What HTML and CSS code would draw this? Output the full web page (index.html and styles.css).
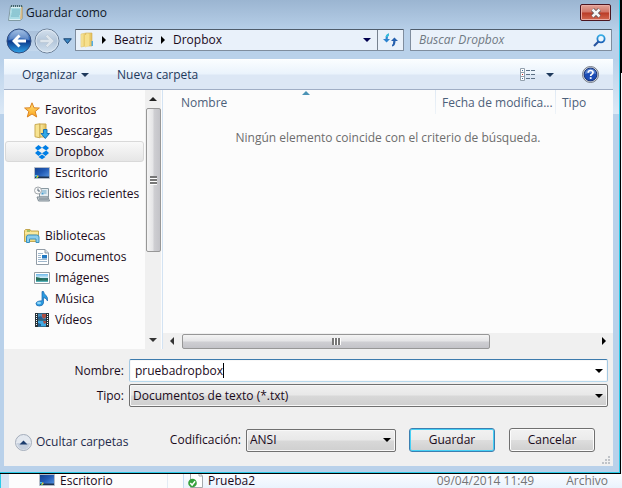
FILE: index.html
```html
<!DOCTYPE html>
<html lang="es">
<head>
<meta charset="utf-8">
<title>Guardar como</title>
<link rel="stylesheet" href="styles.css">
</head>
<body>
<svg class="defs" aria-hidden="true">
  <defs>
    <linearGradient id="blueOrb" x1="0" y1="0" x2="0" y2="1"><stop offset="0" stop-color="#8fb2de"/><stop offset=".45" stop-color="#2b62b4"/><stop offset=".5" stop-color="#0c3789"/><stop offset="1" stop-color="#2fa5ea"/></linearGradient>
    <linearGradient id="greyOrb" x1="0" y1="0" x2="0" y2="1"><stop offset="0" stop-color="#d5e1ee"/><stop offset=".5" stop-color="#b3c6da"/><stop offset="1" stop-color="#d3e2f0"/></linearGradient>
    <linearGradient id="folder" x1="0" y1="0" x2="1" y2="0"><stop offset="0" stop-color="#fbeea8"/><stop offset="1" stop-color="#e2bd55"/></linearGradient>
    <linearGradient id="star" x1="0" y1="0" x2="0" y2="1"><stop offset="0" stop-color="#ffe27a"/><stop offset="1" stop-color="#fba51c"/></linearGradient>
    <linearGradient id="screen" x1="0" y1="0" x2="1" y2="1"><stop offset="0" stop-color="#123f8c"/><stop offset=".45" stop-color="#2159b4"/><stop offset="1" stop-color="#5b9be6"/></linearGradient>
    <linearGradient id="blue" x1="0" y1="0" x2="0" y2="1"><stop offset="0" stop-color="#36aee6"/><stop offset="1" stop-color="#1b62b8"/></linearGradient>
    <linearGradient id="pic" x1="0" y1="0" x2="0" y2="1"><stop offset="0" stop-color="#6db8ea"/><stop offset=".5" stop-color="#d9f0f8"/><stop offset=".55" stop-color="#246f6d"/><stop offset="1" stop-color="#5ebbc4"/></linearGradient>
    <symbol id="desktop" viewBox="0 0 16 16"><path d="M.5 2.500h15v11H.5z" fill="url(#screen)" stroke="#b4bcc8"/><path d="M1 11.500h14V13H1z" fill="#1d3350"/><path d="M1 10h2v1.500H1z" fill="#4ac3e8"/><path d="M3 10.500h1.500V12H3z" fill="#e7c73e"/><path d="M2 12h2v1H2z" fill="#6fc24c"/></symbol>
  </defs>
</svg>

<div class="screen">
<main class="dialog">
  <header class="titlebar">
    <svg class="note" viewBox="0 0 16 17"><path d="M2.500 2h12v12l-2 2.500H.5z" fill="#d9eff4" stroke="#809aa3"/><path d="M3 4h10l-1 11H1.500z" fill="#a9dbe4"/><path d="M13 3h1.500v11L12 16z" fill="#d8b985"/><path d="M4 6h8M4 8h8M3.500 10H12M3 12h8" stroke="#74b4c3"/><path d="M3.500 1v2M5.500 1v2M7.500 1v2M9.500 1v2M11.500 1v2M13.500 1v2" stroke="#42636c"/></svg>
    <h1>Guardar como</h1>
    <button class="close" aria-label="Cerrar"><svg width="12" height="10" viewBox="0 0 12 10"><path d="M2.500 1.500l7 7M9.500 1.500l-7 7" stroke="#5c5155" stroke-width="4"/><path d="M2.500 1.500l7 7M9.500 1.500l-7 7" stroke="#f5f5f5" stroke-width="2.500"/></svg></button>
  </header>

  <nav class="navbar">
    <div class="orbs">
      <button aria-label="Atrás"><svg width="26" height="26" viewBox="0 0 26 26"><circle cx="13" cy="13" r="12" fill="url(#blueOrb)" stroke="#324d7e"/><path d="M3 12a10 10 0 0 1 20 0q-10-4-20 0z" fill="#fff" opacity=".22"/><path d="M6 13l6.500-6.500 2 2-3 3H20v3h-8.500l3 3-2 2z" fill="#fff"/></svg></button>
      <button aria-label="Adelante"><svg width="26" height="26" viewBox="0 0 26 26"><circle cx="13" cy="13" r="12" fill="url(#greyOrb)" stroke="#6c8098"/><circle cx="13" cy="13" r="11" fill="none" stroke="#e6eef6" opacity=".7"/><path d="M20 13l-6.500-6.500-2 2 3 3H6v3h8.500l-3 3 2 2z" fill="#dde5ec" stroke="#b5c4d3" stroke-width=".6"/></svg></button>
      <button class="recent" aria-label="Ubicaciones recientes"><svg width="9" height="7" viewBox="0 0 9 7"><path d="M.7.8h7.600L4.500 5.500z" fill="#3a87c4" stroke="#16406f"/></svg></button>
    </div>
    <div class="address">
      <svg width="14" height="16" viewBox="0 0 14 16"><path d="M1 2l5-1v13l-5 1z" fill="url(#folder)" stroke="#dfc36f" stroke-width=".6"/><path d="M6 1h6v13H6z" fill="url(#folder)" stroke="#d5b057" stroke-width=".6"/><path d="M5 3l4-1v12l-4 1.500z" fill="#f6e08d"/><path d="M11.500 9h1.500v5h-1.500z" fill="#54aee1"/></svg>
      <i class="tri right"></i><a href="#beatriz">Beatriz</a>
      <i class="tri right"></i><a href="#dropbox">Dropbox</a>
      <button class="drop" aria-label="Ubicaciones anteriores"><i class="tri down navy"></i></button>
      <button class="refresh" aria-label="Actualizar"><svg width="15" height="14" viewBox="0 0 15 14"><path d="M0 6h2.500Q2.500 1 6 .5V2Q4.700 3 4.700 6H7L3.600 9.500z" fill="#2c83cf"/><path d="M2.500 4Q3 1 6 .5V2L4.700 4z" fill="#32bedb"/><path d="M15 8h-2.500q0 5-3.500 5.500V12q1.300-1 1.300-4H8l3.400-3.500z" fill="#2560ae"/></svg></button>
    </div>
    <label class="search"><input type="text" aria-label="Buscar" placeholder="Buscar Dropbox"><svg width="13" height="13" viewBox="0 0 13 13"><circle cx="8" cy="4.800" r="3.600" fill="#eaf6ff" stroke="url(#blue)" stroke-width="1.800"/><path d="M5.500 7.500L1 12" stroke="#27549f" stroke-width="2.200"/></svg></label>
  </nav>

  <div class="toolbar">
    <button>Organizar <i class="tri down slate"></i></button>
    <button>Nueva carpeta</button>
    <button class="view" aria-label="Cambiar la vista"><svg width="16" height="13" viewBox="0 0 16 13"><path d="M.5.500h4v12h-4zM.5 4.500h4M.5 8.500h4" fill="#fff" stroke="#93a0ad"/><path d="M2 2h1v1H2zM2 10h1v1H2z" fill="#3f6da0"/><path d="M2 6h1v1H2z" fill="#c22"/><path d="M6 2.500h4M11 2.500h4M6 6.500h4M11 6.500h4M6 10.500h4M11 10.500h4" stroke="#5d7186"/></svg><i class="tri down slate"></i></button>
    <button class="help" aria-label="Ayuda"><svg width="17" height="17" viewBox="0 0 17 17"><circle cx="8.500" cy="8.500" r="8" fill="#d3d8df" stroke="#747b87"/><circle cx="8.500" cy="8.500" r="6.400" fill="#1c4cb5" stroke="#173275"/><path d="M3 8a5.500 5.500 0 0 1 11 0q-5-2-11 0z" fill="#7da5e2" opacity=".6"/><path d="M6.200 6.800Q6.300 4.500 8.600 4.500T11 6.400Q11 7.600 9.700 8.300 8.700 8.900 8.700 10" fill="none" stroke="#fff" stroke-width="1.700"/><path d="M7.800 11.200h1.800v1.700H7.800z" fill="#fff"/></svg></button>
  </div>

  <div class="content">
    <aside class="sidebar">
      <div class="tree">
        <a class="group" href="#favoritos"><svg viewBox="0 0 16 16"><path d="M8 .8l2 5 5.400.2-4.200 3.500 1.500 5.500L8 12l-4.700 3 1.500-5.500L.6 6 6 5.800z" fill="url(#star)" stroke="#db8424"/></svg>Favoritos</a>
        <a href="#descargas"><svg viewBox="0 0 16 16"><path d="M1 1.500L6 .8v14l-5-1z" fill="#f7e391" stroke="#c9ab55"/><path d="M6 1h6v13H6z" fill="url(#folder)" stroke="#c9a64c"/><path d="M9.500 6.500h3.500v4h2.500l-4.200 5-4.300-5h2.500z" fill="#2fa9e8" stroke="#1b70b3"/></svg>Descargas</a>
        <a class="selected" href="#dropbox"><svg viewBox="0 0 16 16" fill="#007ee5"><path d="M4.500 1L8 3.800 3.800 6.500 1 4zM11.500 1L15 4l-2.800 2.500L8 3.800zM3.800 6.500L8 9.200 4.500 12 1 9zM12.200 6.500L15 9l-3.500 3L8 9.200zM4.500 13L8 10.500l3.500 2.500L8 15.200z"/></svg>Dropbox</a>
        <a href="#escritorio"><svg viewBox="0 0 16 16"><use href="#desktop"/></svg>Escritorio</a>
        <a href="#recientes"><svg viewBox="0 0 16 16"><path d="M5.500 2.500h9V11h-9z" fill="#e4edf1" stroke="#8998a0"/><path d="M7.500 5h5M9.500 7h3" stroke="#66a5c7"/><path d="M7.500 6.500h2v2h-2z" fill="#4a9fd0"/><path d="M3 11l11 0 1.500 4H4.500z" fill="#c9d1d6" stroke="#7e8b94"/><path d="M5 13h9" stroke="#65747e"/><circle cx="4" cy="4.500" r="3.500" fill="#f7f8f8" stroke="#a4a9ad"/><path d="M4 2.500v2.500h2" fill="none" stroke="#526273"/></svg>Sitios recientes</a>
        <a class="group gap" href="#bibliotecas"><svg viewBox="0 0 16 16"><path d="M.5 13.500v-11l1-1H6l1 1.500h7.500v10.500z" fill="#f2db80" stroke="#c3a751"/><path d="M1 5h13" stroke="#fff6bb"/><path d="M3 3h3" stroke="#58a44e"/><path d="M2.500 14.500V9q0-2 2-2h8q2.500 0 2.500 2v5.500h-3V11H5.500v3.500z" fill="#8bcdec" stroke="#398fbe"/></svg>Bibliotecas</a>
        <a href="#documentos"><svg viewBox="0 0 16 16"><path d="M2.500.500h8.500L14.500 4v11.500h-12z" fill="#fff" stroke="#929ca6"/><path d="M11 .5V4h3.500" fill="#d7dfe6" stroke="#929ca6"/><path d="M4 4.500h5M4 6.500h3M4 8.500h3M4 10.500h9M4 12.500h9" stroke="#9fb7cc"/><path d="M8 6h5v3.500H8z" fill="#2279c2"/></svg>Documentos</a>
        <a href="#imagenes"><svg viewBox="0 0 16 16"><path d="M.5 2.500h15v11H.5z" fill="#fff" stroke="#969ea5"/><path d="M2 4h12v8H2z" fill="url(#pic)"/><path d="M2 7q4 0 7 2.500l5-.5v1.500H2z" fill="#276c55"/></svg>Imágenes</a>
        <a href="#musica"><svg viewBox="0 0 16 16"><path d="M8 .5h1.500q.5 2.500 2.500 4t1.500 5.500Q12.500 7 9.500 6.500V12Q9 15 5.300 15 2 15 2 12.500 2.500 9.800 8 9.800z" fill="#2a9be0" stroke="#1763ac" stroke-width=".7"/><ellipse cx="5" cy="12" rx="2" ry="1.200" fill="#8fd6f7"/></svg>Música</a>
        <a href="#videos"><svg viewBox="0 0 16 16"><path d="M1 1h14v14H1z" fill="#283238"/><path d="M4 1.500h8v6H4z" fill="#468dbb"/><path d="M4 8.500h8v6H4z" fill="#3faae4"/><path d="M8 2h4v3l-2 2-2-2zM9 9h3v2l-2 1z" fill="#ac4f43"/><path d="M4 5l3-1 2 3H4zM4 11l3 1v2H4z" fill="#235e91"/><path d="M2.500 2v12M13.500 2v12" stroke="#fff" stroke-dasharray="1 1"/></svg>Vídeos</a>
      </div>
      <div class="vscroll"><i class="tri up"></i><div class="thumb"></div><i class="tri down tail"></i></div>
    </aside>
    <section class="files">
      <table>
        <thead><tr><th class="name">Nombre<i class="sort"></i></th><th class="date">Fecha de modifica...</th><th class="type">Tipo</th></tr></thead>
        <tbody><tr><td colspan="3">Ningún elemento coincide con el criterio de búsqueda.</td></tr></tbody>
      </table>
      <div class="hscroll"><i class="tri left"></i><div class="thumb"></div><i class="tri right"></i></div>
    </section>
  </div>

  <form class="footer">
    <div class="fields">
      <label for="name">Nombre:</label>
      <div class="combo edit"><input id="name" type="text" value="pruebadropbox"><span class="caret"></span><i class="tri down"></i></div>
      <label for="kind">Tipo:</label>
      <div class="combo"><select id="kind"><option>Documentos de texto (*.txt)</option></select><i class="tri down"></i></div>
    </div>
    <div class="actions">
      <button class="hide" type="button"><svg width="17" height="17" viewBox="0 0 17 17"><circle cx="8.500" cy="8.500" r="8" fill="#e3e8ef" stroke="#a3acba"/><path d="M2 9h13a6.500 6.500 0 0 1-13 0z" fill="#c6d0de"/><path d="M4.500 10.500l4-4 4 4z" fill="#1c3d6e"/></svg>Ocultar carpetas</button>
      <label for="enc">Codificación:</label>
      <div class="combo encoding"><select id="enc"><option>ANSI</option></select><i class="tri down"></i></div>
      <button class="push default" type="button">Guardar</button>
      <button class="push" type="button">Cancelar</button>
    </div>
    <svg class="grip" width="8" height="8" viewBox="0 0 8 8"><path d="M6 0h2v2H6zM3 3h2v2H3zM6 3h2v2H6zM0 6h2v2H0zM3 6h2v2H3zM6 6h2v2H6z" fill="#bfc3c8"/></svg>
  </form>
</main>

<div class="behind">
  <div class="behind-tree"><svg width="16" height="14" viewBox="0 2 16 14"><use href="#desktop" width="16" height="16"/></svg>Escritorio</div>
  <div class="behind-files">
    <svg width="15" height="14" viewBox="0 2 15 14"><path d="M2.500.500H11L14.500 4v11.500h-12z" fill="#fff" stroke="#a4a9ad"/><path d="M11 .5V4h3.500" fill="none" stroke="#a4a9ad"/><circle cx="4.500" cy="11" r="4.300" fill="#35a13b"/><path d="M2.300 11l1.800 2 3-3.700" fill="none" stroke="#fff" stroke-width="1.500"/></svg>
    <span class="file">Prueba2</span><span class="when">09/04/2014 11:49</span><span class="what">Archivo</span>
  </div>
</div>
</div>
</body>
</html>
```
FILE: styles.css
```css
* { box-sizing: border-box; }

body {
  margin: 0;
  color: #1a0a1a;
  font: 12px/16px "Open Sans", "Noto Sans", sans-serif;
}

.defs { position: absolute; width: 0; height: 0; }
.screen {
  display: flex;
  flex-direction: column;
  min-height: 100vh;
  background: linear-gradient(#000 73px, #f4f8fd 73px);
}

button, input, select {
  font: inherit;
  color: inherit;
  margin: 0;
  padding: 0;
  border: 0;
  background: none;
  appearance: none;
  outline: 0;
}
button { display: flex; align-items: center; }
a { color: inherit; text-decoration: none; }
svg { flex: none; display: block; }

.tri { flex: none; width: 0; height: 0; border: 4px solid transparent; }
.tri.right { border-width: 4px 0 4px 4px; border-left-color: #000; }
.tri.left { border-width: 4px 4px 4px 0; border-right-color: #333; }
.tri.up { border-width: 0 4px 4px; border-bottom-color: #222; }
.tri.down { border-width: 4px 4px 0; border-top-color: #000; }
.tri.navy { border-top-color: #00004f; }
.tri.slate { border-top-color: #1e395b; }
.tri.tail { border-top-color: #333; }

/* Window frame, with the glass reflection down both sides */
.dialog {
  flex: none;
  margin-right: 1px;
  padding: 0 7px 7px 4px;
  border: solid #000;
  border-width: 0 1px 1px 0;
  box-shadow: inset -1px -1px #2bcbe8;
  background:
    linear-gradient(#b9d1ea, #dce9f6) no-repeat 0 60px / 100% 54px,
    linear-gradient(#9bb5d1, #b9d1ea 32px, #b9d1ea);
}

.titlebar { display: flex; height: 28px; padding: 4px 2px 0 4px; align-items: flex-start; }
.note { width: 16px; height: 17px; }
.titlebar h1 { flex: 1; margin: 1px 0 0 2px; font-size: 12px; font-weight: 400; color: #101828; }
.close {
  justify-content: center;
  width: 31px;
  height: 17px;
  border: 1px solid #4c1620;
  border-radius: 2px;
  box-shadow: inset 0 0 0 1px #eaaaa2;
  background: linear-gradient(#e2a397, #d07466 48%, #b93a26 52%, #d36a52);
}

.navbar { display: flex; gap: 6px; height: 31px; padding: 1px 1px 0 0; }
.orbs {
  display: flex;
  flex: none;
  gap: 2px;
  width: 65px;
  height: 24px;
  padding-left: 2px;
  align-items: center;
  background: linear-gradient(#a9c0da, #c4d8ed) no-repeat 14px 2px / 30px 20px;
}
.recent { margin-left: 1px; }
.address, .search {
  display: flex;
  align-items: center;
  height: 22px;
  border: 1px solid #7f8d9e;
  border-top-color: #4f5c6b;
  border-radius: 1px;
  background: #e9f1fa;
}
.address { flex: 1; gap: 8px; padding-left: 4px; }
.drop { margin-left: auto; }
.refresh { width: 26px; height: 20px; justify-content: center; border-left: 1px solid #77828f; margin-left: -2px; }
.search { flex: none; width: 202px; padding: 0 5px 0 8px; }
.search input { flex: 1; min-width: 0; }
.search input::placeholder { color: #707983; opacity: 1; font-style: italic; }

.toolbar {
  display: flex;
  align-items: center;
  height: 31px;
  padding: 0 14px 0 18px;
  gap: 28px;
  color: #1e395b;
  border-top: 1px solid #fff;
  border-bottom: 1px solid #a0aec5;
  background: linear-gradient(#fafdff, #eaf3fc 48%, #dce7f5 52%, #dce7f5);
}
.toolbar button { gap: 4px; }
.toolbar .view { margin-left: auto; gap: 10px; }

/* Folder tree and file list */
.content { display: flex; height: 259px; background: #fcfcfc; }
.sidebar { display: flex; flex: none; width: 159px; border-right: 1px solid #d3e3f3; }
.tree { flex: 1; padding: 9px 1px 0; }
.tree a { display: flex; align-items: center; gap: 5px; height: 21px; padding-left: 28px; border: 1px solid transparent; white-space: nowrap; }
.tree a.group { padding-left: 18px; }
.tree a.gap { margin-top: 21px; }
.tree svg { width: 16px; height: 16px; }
.tree a.selected { border-color: #d9d9d9; border-radius: 3px; background: linear-gradient(#f9f9f9, #e6e6e6); }
.vscroll {
  display: flex;
  flex-direction: column;
  align-items: center;
  width: 16px;
  margin-right: 1px;
  padding: 7px 0;
  background: #f0f0f0;
}
.thumb { border: 1px solid #979797; border-radius: 2px; }
.vscroll .thumb {
  width: 15px;
  height: 144px;
  margin: 7px 0 auto;
  background:
    repeating-linear-gradient(#777 0 2px, #fff 2px 3px) no-repeat center / 7px 9px,
    linear-gradient(90deg, #f4f4f4, #e4e4e6 48%, #cfcfd3 52%, #c3c3c8);
}

.files { display: flex; flex: 1; flex-direction: column; min-width: 0; }
table { width: 100%; border-collapse: collapse; table-layout: fixed; }
th { position: relative; height: 24px; padding: 2px 0 0 7px; font-weight: 400; text-align: left; color: #4c607a; background: linear-gradient(#dfe9f4, #eef3f8) no-repeat left / 1px 100%; }
th.name { padding-left: 18px; background: none; }
th.date { width: 120px; }
th.type { width: 58px; }
.sort { position: absolute; top: 1px; left: 51%; border: solid transparent; border-width: 0 4px 4px; border-bottom-color: #4b93b5; }
td { padding: 16px 0 0; color: #6d6d6d; text-align: center; }
.hscroll {
  display: flex;
  align-items: center;
  height: 16px;
  margin-top: auto;
  padding: 0 7px;
  background: #f0f0f0;
}
.hscroll .thumb {
  flex: 0 0 308px;
  height: 15px;
  margin: 0 auto 0 8px;
  background:
    repeating-linear-gradient(90deg, #777 0 2px, #fff 2px 3px) no-repeat center / 9px 7px,
    linear-gradient(#f4f4f4, #e4e4e6 48%, #cfcfd3 52%, #c3c3c8);
}

/* File name, type and actions */
.footer { position: relative; height: 117px; padding: 10px 5px 0 11px; background: #f0f0f0; }
.fields { display: grid; grid-template-columns: 109px 1fr; gap: 2px 5px; align-items: center; }
.fields label { text-align: right; }
.combo {
  display: flex;
  align-items: center;
  height: 23px;
  padding: 0 4px 0 3px;
  border: 1px solid #707070;
  border-radius: 2px;
  box-shadow: inset 0 0 0 1px #f8f8f8;
  background: linear-gradient(#f0f0f0, #e8e8e8 48%, #d8d8d8 52%, #cfcfcf);
}
.combo select { flex: 1; min-width: 0; }
.combo.edit { padding-left: 5px; background: #fff; border-color: #3d7bad #a4c9e3 #b7d9ed #a4c9e3; }
.edit input { field-sizing: content; }
.edit .caret { width: 1px; height: 15px; background: #000; }
.edit .tri { margin-left: auto; }
.actions { display: flex; align-items: center; margin-top: 21px; padding-right: 13px; }
.actions label { margin-left: auto; }
.hide { gap: 4px; color: #1e2a4b; padding-top: 4px; }
.encoding { width: 150px; margin: 0 13px 0 5px; }
.push {
  justify-content: center;
  width: 86px;
  height: 24px;
  border: 1px solid #707070;
  border-radius: 3px;
  box-shadow: inset 0 0 0 1px #fcfcfc;
  background: linear-gradient(#f2f2f2, #ebebeb 48%, #dddddd 52%, #cfcfcf);
}
.push + .push { margin-left: 14px; }
.push.default { border-color: #3c7fb1; box-shadow: inset 0 0 0 1px #46d0f5; }
.grip { position: absolute; right: 3px; bottom: 2px; }

/* Explorer window underneath */
.behind { display: flex; flex: 1; border-left: 1px solid #2bcbe8; background: #fcfcfc; line-height: 14px; }
.behind-tree {
  display: flex;
  flex: none;
  gap: 5px;
  width: 167px;
  padding-left: 30px;
  border-left: 8px solid #d5e4f4;
  border-right: 1px solid #e3ebf4;
}
.behind-files {
  display: flex;
  flex: 1;
  gap: 5px;
  margin-left: 15px;
  padding: 0 14px 0 4px;
  border-left: 1px solid #c5dcf3;
  background: linear-gradient(#fafcff, #eaf3fd);
}
.when, .what { color: #757575; }
.when { margin-left: auto; }
.what { margin-left: 27px; }
```
